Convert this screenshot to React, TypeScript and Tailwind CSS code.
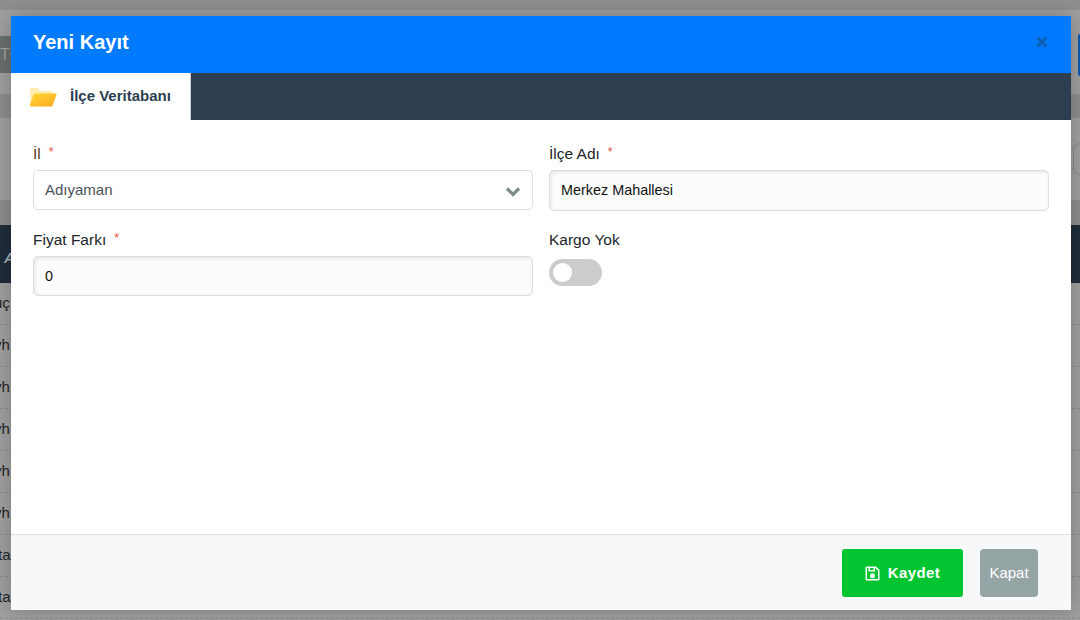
const rows: { a: string; b: string; cut: string }[] = [
  { a: "uç", b: "", cut: "-ml-[6px]" },
  { a: "yh", b: ":", cut: "-ml-[6px]" },
  { a: "yh", b: ":", cut: "-ml-[6px]" },
  { a: "yh", b: ":", cut: "-ml-[6px]" },
  { a: "yh", b: ":", cut: "-ml-[6px]" },
  { a: "yh", b: ":", cut: "-ml-[6px]" },
  { a: "ta", b: "r", cut: "-ml-[2px]" },
  { a: "ta", b: "r", cut: "-ml-[2px]" },
];

function Folder() {
  return (
    <svg width="28" height="20" viewBox="0 0 28 20" className="shrink-0">
      <defs>
        <linearGradient id="f" x1="0" y1="0" x2="1" y2="1">
          <stop offset="0" stopColor="#ffd92e" />
          <stop offset="1" stopColor="#ffa726" />
        </linearGradient>
      </defs>
      <path d="M1 2.5C1 1.5 1.6 1 2.5 1h6l2.5 3h11c1 0 1.5.5 1.5 1.5V7H1z" fill="#ffeeb0" />
      <path d="M1 3v14l4-10h2V3z" fill="#ffeeb0" />
      <path d="M6 6.5h20.500c.8 0 1.200.5 1 1.200l-3.800 10.500c-.3.800-.8 1.300-1.700 1.300H2c-1 0-1.400-.6-1.100-1.400L4.500 7.500c.2-.7.700-1 1.500-1z" fill="url(#f)" />
    </svg>
  );
}

function Chevron() {
  return (
    <svg width="16" height="12" viewBox="0 0 16 12" className="mt-[3px] shrink-0">
      <path d="M2 2.500 8 8.500 14 2.500" fill="none" stroke="#7f8c8d" strokeWidth="3.200" />
    </svg>
  );
}

function Disk() {
  return (
    <svg width="15" height="15" viewBox="0 0 15 15" className="shrink-0">
      <path
        fillRule="evenodd"
        fill="#ffffff"
        d="M1.500.5h9.500l3.500 3.500v9.500a1 1 0 0 1-1 1h-12a1 1 0 0 1-1-1v-12a1 1 0 0 1 1-1zM2 2v11h11V4.700L10.300 2H10v3.500H3.500V2zM5 2v2h3.500V2zM7.500 7.200a2.500 2.500 0 1 1 0 5 2.500 2.500 0 0 1 0-5z"
      />
    </svg>
  );
}

function Close() {
  return (
    <svg width="12" height="12" viewBox="0 0 12 12" className="shrink-0">
      <path d="M1.500 1.500 10.500 10.500M10.500 1.500 1.500 10.500" fill="none" stroke="#0d5fb3" strokeWidth="3" />
    </svg>
  );
}

function Label({ text, star, cls = "text-[#212529]" }: { text: string; star?: boolean; cls?: string }) {
  return (
    <div className={`h-[20px] text-[15.500px] leading-[20px] ${cls}`}>
      {text}
      {star && <span className="ml-[8px] align-top text-[12.500px] leading-[16px] text-[#e74c3c]">*</span>}
    </div>
  );
}

export default function App() {
  return (
    <div className="relative h-[620px] w-[1080px] overflow-hidden bg-[#a0a0a0] font-['Liberation_Sans',Arial,sans-serif]">
      <div className="flex flex-col">
        <div className="h-[10px] bg-[#8f8f8f]" />
        <div className="h-[26px]" />
        <div className="flex h-[37px] items-center justify-between">
          <div className="flex h-full w-[40px] items-center bg-[#6a6f6f] text-[16px] text-[#a3a3a3]">Tü</div>
          <div className="h-[42px] w-[2px] rounded-l-[2px] bg-[#0d5ab0]" />
        </div>
        <div className="h-[21px]" />
        <div className="h-[24px] border-t border-[#8f8f8f] bg-[#8e8e8e]" />
        <div className="flex h-[82px] items-center justify-end bg-[#a0a0a0]">
          <div className="h-[32px] w-[7px] rounded-l-full border border-r-0 border-[#8a8a8a]" />
        </div>
        <div className="h-[25px] border-t border-[#929292] bg-[#8e8e8e]" />
        <div className="flex h-[58px] items-center bg-[#1f2c3a] pl-[4px] pt-[8px] text-[15px] font-bold italic text-[#a9adb2]">A</div>
        {rows.map((r, i) => (
          <div key={i} className="flex h-[42px] items-center border-b border-dashed border-[#8d8d8d] text-[15px] text-[#222]">
            <span className={`whitespace-nowrap ${r.cut}`}>
              {r.a}
              <span className="text-[#9a6a10]">{r.b}</span>
            </span>
          </div>
        ))}
      </div>

      <div className="absolute left-[11px] top-[16px] flex h-[594px] w-[1060px] flex-col bg-white shadow-[0_0_20px_rgba(0,0,0,0.25)]">
        <div className="flex h-[57px] shrink-0 items-center justify-between bg-[#007bff] pb-[5px] pl-[22px] pr-[23px]">
          <h1 className="text-[20px] font-bold text-white">Yeni Kayıt</h1>
          <Close />
        </div>
        <div className="flex h-[47px] shrink-0 bg-[#2c3e50]">
          <div className="flex w-[180px] items-center border-r border-[#cccccc] bg-white pl-[18px] text-[15px] font-bold text-[#2c3e50]">
            <Folder />
            <span className="ml-[13px]">İlçe Veritabanı</span>
          </div>
        </div>
        <div className="grid flex-1 grid-cols-2 content-start gap-x-[16px] px-[22px] pt-[24px]">
          <div className="h-[86px]">
            <Label text="İl" star cls="text-[#5c3a10]" />
            <div className="mt-[6px] flex h-[40px] items-center justify-between rounded-[5px] border border-[#dddddd] bg-white pl-[11px] pr-[11px] text-[15px] text-[#495057]">
              <span>Adıyaman</span>
              <Chevron />
            </div>
          </div>
          <div className="h-[86px]">
            <Label text="İlçe Adı" star />
            <div className="mt-[6px] flex h-[41px] items-center rounded-[5px] border border-[#dddddd] bg-[#fcfcfc] pl-[11px] pt-[1px] text-[14.400px] text-[#111] shadow-[inset_1px_1px_4px_rgba(0,0,0,0.1)]">
              Merkez Mahallesi
            </div>
          </div>
          <div>
            <Label text="Fiyat Farkı" star />
            <div className="mt-[6px] flex h-[40px] items-center rounded-[5px] border border-[#dddddd] bg-[#fcfcfc] pl-[11px] pt-[1px] text-[14.400px] text-[#111] shadow-[inset_1px_1px_4px_rgba(0,0,0,0.1)]">
              0
            </div>
          </div>
          <div>
            <Label text="Kargo Yok" />
            <div className="mt-[9px] flex h-[27px] w-[53px] items-center rounded-full bg-[#cccccc] pl-[4px]">
              <div className="h-[19px] w-[19px] rounded-full bg-white" />
            </div>
          </div>
        </div>
        <div className="flex h-[76px] shrink-0 items-center justify-end gap-[17px] border-t border-[#e0e0e0] bg-[#f7f8fa] pr-[33px]">
          <button className="flex h-[48px] w-[121px] items-center justify-center gap-[8px] rounded-[3px] bg-[#00c531] pt-[1px] text-[15px] font-bold tracking-[0.4px] text-white">
            <Disk />
            Kaydet
          </button>
          <button className="flex h-[48px] w-[58px] items-center justify-center rounded-[4px] bg-[#95a5a6] pt-[1px] text-[15px] text-white">
            Kapat
          </button>
        </div>
      </div>
    </div>
  );
}
